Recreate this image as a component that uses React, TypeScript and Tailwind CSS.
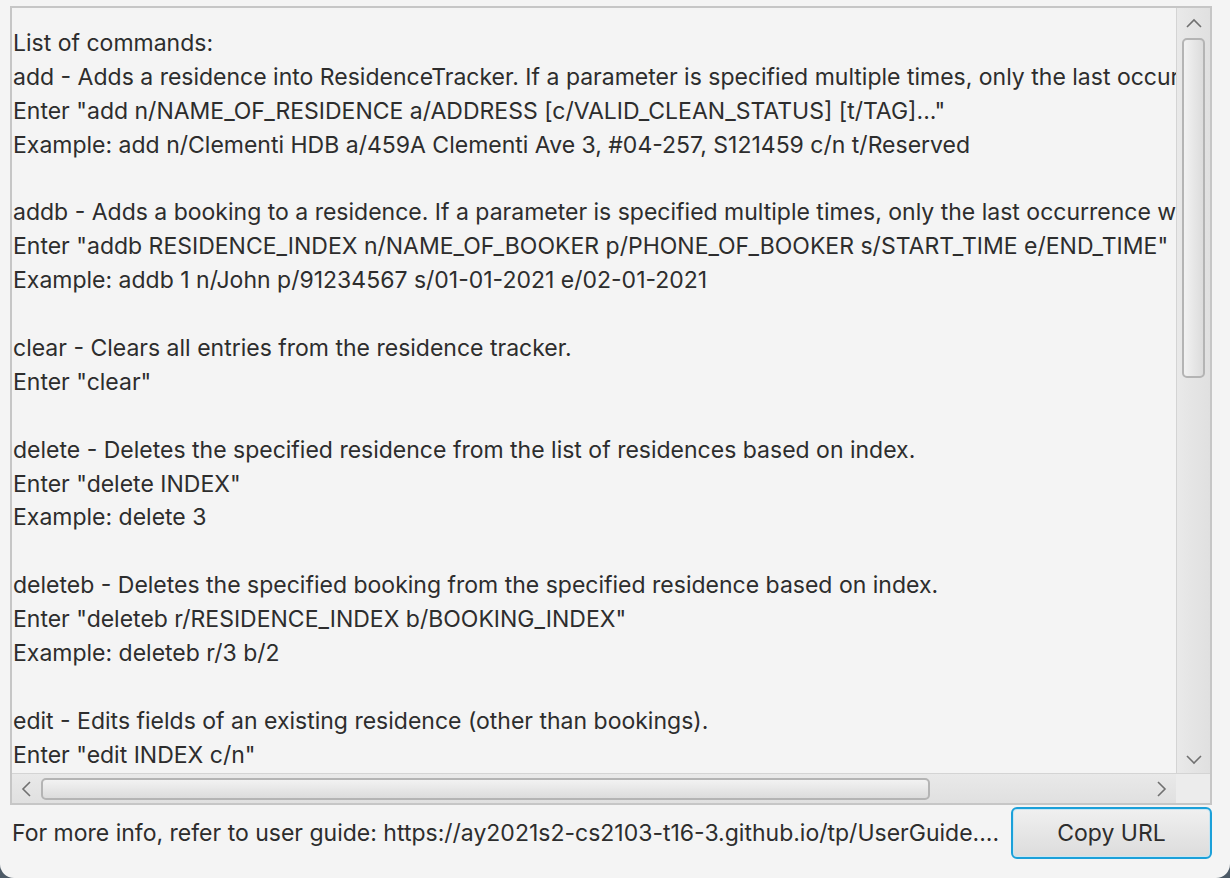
const lines: string[] = [
  "List of commands:",
  "add - Adds a residence into ResidenceTracker. If a parameter is specified multiple times, only the last occurrence will be taken.",
  'Enter "add n/NAME_OF_RESIDENCE a/ADDRESS [c/VALID_CLEAN_STATUS] [t/TAG]..."',
  "Example: add n/Clementi HDB a/459A Clementi Ave 3, #04-257, S121459 c/n t/Reserved",
  "",
  "addb - Adds a booking to a residence. If a parameter is specified multiple times, only the last occurrence will be taken.",
  'Enter "addb RESIDENCE_INDEX n/NAME_OF_BOOKER p/PHONE_OF_BOOKER s/START_TIME e/END_TIME"',
  "Example: addb 1 n/John p/91234567 s/01-01-2021 e/02-01-2021",
  "",
  "clear - Clears all entries from the residence tracker.",
  'Enter "clear"',
  "",
  "delete - Deletes the specified residence from the list of residences based on index.",
  'Enter "delete INDEX"',
  "Example: delete 3",
  "",
  "deleteb - Deletes the specified booking from the specified residence based on index.",
  'Enter "deleteb r/RESIDENCE_INDEX b/BOOKING_INDEX"',
  "Example: deleteb r/3 b/2",
  "",
  "edit - Edits fields of an existing residence (other than bookings).",
  'Enter "edit INDEX c/n"',
];

function Chevron({ dir }: { dir: "up" | "down" | "left" | "right" }) {
  const pts = {
    up: "1,9 8,2 15,9",
    down: "1,2 8,9 15,2",
    left: "9,1 2,8 9,15",
    right: "2,1 9,8 2,15",
  }[dir];
  const vert = dir === "up" || dir === "down";
  return (
    <svg width={vert ? 16 : 11} height={vert ? 11 : 16} viewBox={vert ? "0 0 16 11" : "0 0 11 16"}>
      <polyline points={pts} fill="none" stroke="#707070" strokeWidth="1.6" />
    </svg>
  );
}

export default function App() {
  return (
    <div className="w-[1230px] h-[878px] bg-[#4d5a66]" style={{ fontFamily: "Inter, 'Open Sans', sans-serif" }}>
      <div className="w-full h-full bg-[#f4f4f4] rounded-b-[14px] flex flex-col pt-[6px] pl-[10px] pr-[18px] text-[#2d2d2d]">

        {/* Text area */}
        <div className="w-[1202px] h-[799px] border-2 border-[#c6c6c6] flex flex-col bg-[#f4f4f4]">
          <div className="flex flex-1 min-h-0">
            <div className="flex-1 overflow-hidden pt-[19px] pl-[1px] text-[23px] leading-[33.9px] whitespace-pre">
              {lines.map((l, i) => (
                <div key={i} className="h-[33.9px]">{l || " "}</div>
              ))}
            </div>

            {/* Vertical scrollbar */}
            <div className="w-[34px] border-l border-[#d4d4d4] bg-gradient-to-r from-[#e9e9e9] to-[#e0e0e0] flex flex-col items-center">
              <div className="h-[28px] flex items-center justify-center pt-[2px]">
                <Chevron dir="up" />
              </div>
              <div className="w-[23px] h-[340px] mt-[2px] rounded-[5px] border-2 border-[#b4b4b4] bg-gradient-to-r from-[#f2f2f2] to-[#dcdcdc]" />
              <div className="flex-1" />
              <div className="h-[28px] flex items-center justify-center">
                <Chevron dir="down" />
              </div>
            </div>
          </div>

          {/* Horizontal scrollbar */}
          <div className="h-[30px] flex border-t border-[#d4d4d4]">
            <div className="flex-1 flex items-center bg-gradient-to-b from-[#e9e9e9] to-[#e0e0e0]">
              <div className="w-[29px] flex justify-center">
                <Chevron dir="left" />
              </div>
              <div className="w-[889px] h-[22px] rounded-[5px] border-2 border-[#b4b4b4] bg-gradient-to-b from-[#f2f2f2] to-[#dcdcdc]" />
              <div className="flex-1" />
              <div className="w-[29px] flex justify-center">
                <Chevron dir="right" />
              </div>
            </div>
            <div className="w-[34px] bg-[#ececec]" />
          </div>
        </div>

        {/* Bottom bar */}
        <div className="flex items-center justify-between h-[56px] w-[1202px]">
          <span className="pl-[2px] text-[23px] whitespace-nowrap">
            For more info, refer to user guide: https://ay2021s2-cs2103-t16-3.github.io/tp/UserGuide....
          </span>
          <button className="w-[201px] h-[52px] rounded-[6px] border-2 border-[#1ba0d9] bg-gradient-to-b from-[#f0f0f0] to-[#dcdcdc] text-[23px] text-[#2d2d2d] shadow-[inset_0_0_0_1px_#c8e6f3]">
            Copy URL
          </button>
        </div>
      </div>
    </div>
  );
}
